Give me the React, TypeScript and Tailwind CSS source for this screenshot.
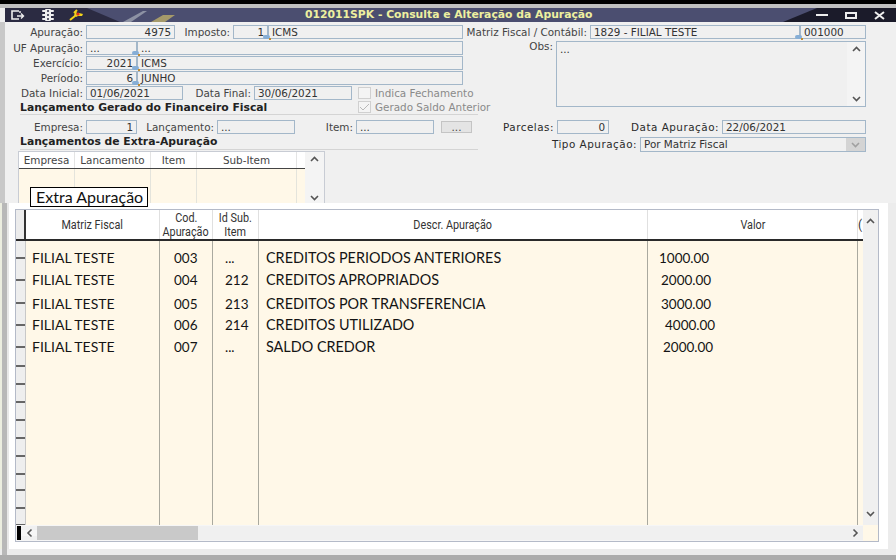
const borderField = "border border-[#a3b7c9]";

function LookupMark() {
  return (
    <span className="absolute right-[-4px] bottom-[-2px] z-10 h-[5px] w-[8px]">
      <span className="absolute left-0 top-0 h-[4px] w-[7px] rounded-full bg-[#86aed6]" />
      <span className="absolute right-0 bottom-0 h-[2px] w-[2px] bg-[#c08a30]" />
    </span>
  );
}

type FieldProps = {
  w: string;
  text?: string;
  right?: boolean;
  lookup?: boolean;
};

function Field({ w, text, right, lookup }: FieldProps) {
  return (
    <div
      className={`relative flex h-[14px] shrink-0 items-center bg-[#f0f0f0] px-[3px] leading-none text-[#333] ${borderField} ${w} ${
        right ? "justify-end" : ""
      }`}
    >
      <span className="whitespace-nowrap">{text}</span>
      {lookup ? <LookupMark /> : null}
    </div>
  );
}

function Label({ w, text, wide }: { w: string; text: string; wide?: boolean }) {
  return (
    <div
      className={`shrink-0 whitespace-nowrap pr-[3px] text-right leading-none ${w} ${
        wide ? "tracking-[0.5px] text-[#2a2a2a]" : "text-[#444]"
      }`}
    >
      {text}
    </div>
  );
}

function Chevron({ up, className }: { up?: boolean; className?: string }) {
  return (
    <svg width="9" height="6" viewBox="0 0 9 6" className={className}>
      <path
        d={up ? "M1 5 L4.5 1.5 L8 5" : "M1 1 L4.5 4.5 L8 1"}
        fill="none"
        stroke="#555"
        strokeWidth="1.6"
      />
    </svg>
  );
}

function TitleBar() {
  return (
    <div className="flex h-[14px] pl-[5px]">
      <div className="relative flex h-full w-full items-center overflow-hidden bg-[#4b4e70]">
        <svg width="891" height="14" viewBox="0 0 891 14" className="absolute left-0 top-0">
          <polygon points="0,0 82,0 115,14 0,14" fill="#2b2b42" />
          <polygon points="118,14 138,3 142,3 126,14" fill="#8d92a4" />
          <polygon points="146,14 158,7 170,7 160,14" fill="#a59a6a" />
          <polygon points="812,0 891,0 891,14 778,14" fill="#1b1b2a" />
        </svg>
        <svg width="14" height="12" viewBox="0 0 14 12" className="relative ml-[6px]">
          <path d="M8 2 H1 V10 H8" fill="none" stroke="#eee" strokeWidth="1.6" />
          <path d="M9 2 V4 M6 7 H12 M10 4.5 L12.5 7 L10 9.5" fill="none" stroke="#eee" strokeWidth="1.4" />
        </svg>
        <svg width="14" height="12" viewBox="0 0 14 12" className="relative ml-[16px]">
          <rect x="4" y="0" width="6" height="12" rx="1" fill="#f0f0f0" />
          <rect x="1" y="1" width="12" height="2" rx="1" fill="#f0f0f0" />
          <rect x="1" y="5" width="12" height="2" rx="1" fill="#f0f0f0" />
          <rect x="1" y="9" width="12" height="2" rx="1" fill="#f0f0f0" />
          <circle cx="7" cy="2" r="1" fill="#2b2b42" />
          <circle cx="7" cy="6" r="1" fill="#2b2b42" />
          <circle cx="7" cy="10" r="1" fill="#2b2b42" />
        </svg>
        <svg width="15" height="12" viewBox="0 0 15 12" className="relative ml-[14px]">
          <path d="M1 11 L6 7 L7 3 M8 1 L5 4" fill="none" stroke="#f2d21b" strokeWidth="2" />
          <path d="M6 6 L10 4 L14 5 L13 7 L9 7 L7 8 Z" fill="#f2d21b" />
          <circle cx="9" cy="5" r="1.6" fill="#e0301e" />
        </svg>
        <div className="relative ml-[221px] whitespace-nowrap text-[10.8px] font-bold leading-none text-[#eef0a0]">
          012011SPK - Consulta e Alteração da Apuração
        </div>
        <div className="relative ml-auto flex items-center pr-[11px]">
          <span className="h-[2px] w-[12px] bg-[#eee]" />
          <span className="ml-[17px] h-[7px] w-[12px] border-2 border-[#eee]" />
          <svg width="11" height="9" viewBox="0 0 11 9" className="ml-[17px]">
            <path d="M1 1 L10 8 M10 1 L1 8" stroke="#eee" strokeWidth="2" />
          </svg>
        </div>
      </div>
    </div>
  );
}

function Row({ mt, children }: { mt: string; children: React.ReactNode }) {
  return <div className={`flex items-center ${mt}`}>{children}</div>;
}

function LeftForm() {
  return (
    <div className="w-[464px] shrink-0 pt-[3px]">
      <Row mt="">
        <Label w="w-[86px]" text="Apuração:" />
        <Field w="w-[89px]" text="4975" right />
        <Label w="w-[58px]" text="Imposto:" />
        <Field w="w-[35px]" text="1" right lookup />
        <Field w="w-[195px]" text="ICMS" />
      </Row>
      <Row mt="mt-[2px]">
        <Label w="w-[86px]" text="UF Apuração:" />
        <Field w="w-[51px]" text="..." lookup />
        <Field w="w-[326px]" text="..." />
      </Row>
      <Row mt="mt-px">
        <Label w="w-[86px]" text="Exercício:" />
        <Field w="w-[51px]" text="2021" right lookup />
        <Field w="w-[326px]" text="ICMS" />
      </Row>
      <Row mt="mt-px">
        <Label w="w-[86px]" text="Período:" />
        <Field w="w-[51px]" text="6" right lookup />
        <Field w="w-[326px]" text="JUNHO" />
      </Row>
      <Row mt="mt-px">
        <Label w="w-[86px]" text="Data Inicial:" />
        <Field w="w-[97px]" text="01/06/2021" />
        <Label w="w-[71px]" text="Data Final:" />
        <Field w="w-[98px]" text="30/06/2021" />
        <span className="ml-[6px] h-[12px] w-[13px] shrink-0 border border-[#d0d0d0] bg-[#f4f4f4]" />
        <span className="ml-[4px] whitespace-nowrap leading-none text-[#8a8a8a]">Indica Fechamento</span>
      </Row>
      <div className="flex">
        <div className="ml-[20px] w-[338px] shrink-0 whitespace-nowrap pt-[3px] text-[10.8px] font-bold leading-[10px] text-[#222]">
          Lançamento Gerado do Financeiro Fiscal
        </div>
        <div className="flex items-center pt-[1px]">
          <span className="flex h-[12px] w-[13px] shrink-0 items-center justify-center border border-[#d0d0d0] bg-[#f4f4f4]">
            <svg width="11" height="8" viewBox="0 0 11 8">
              <path d="M1 4 L4 7 L10 1" fill="none" stroke="#b8b8b8" strokeWidth="1" />
            </svg>
          </span>
          <span className="ml-[4px] whitespace-nowrap leading-none text-[#8a8a8a]">Gerado Saldo Anterior</span>
        </div>
      </div>
      <div className="ml-[20px] mt-px h-px w-[458px] bg-[#d4d4d4]" />
      <Row mt="mt-[5px]">
        <Label w="w-[86px]" text="Empresa:" />
        <Field w="w-[51px]" text="1" right />
        <Label w="w-[80px]" text="Lançamento:" />
        <Field w="w-[78px]" text="..." />
        <Label w="w-[61px]" text="Item:" />
        <Field w="w-[78px]" text="..." />
        <div className="ml-[7px] flex h-[12px] w-[31px] shrink-0 items-center justify-center border border-[#c4c4c4] bg-[#e4e4e4] leading-none text-[#444]">
          ...
        </div>
      </Row>
      <div className="ml-[20px] mt-[3px] whitespace-nowrap text-[10.8px] font-bold leading-[10px] text-[#222]">
        Lançamentos de Extra-Apuração
      </div>
      <div className="ml-[20px] mt-[2px] h-px w-[458px] bg-[#d4d4d4]" />
      <ExtraTable />
    </div>
  );
}

function ExtraTable() {
  const columns = [
    { name: "Empresa", w: "w-[56px]" },
    { name: "Lancamento", w: "w-[76px]" },
    { name: "Item", w: "w-[46px]" },
    { name: "Sub-Item", w: "w-[100px]" },
  ];
  return (
    <div className="ml-[18px] mt-px flex h-[54px] w-[307px] border border-[#c8ccd4] bg-white">
      <div className="flex w-[286px] flex-col">
        <div className="flex h-[17px] border-b border-[#444]">
          {columns.map((c) => (
            <div
              key={c.name}
              className={`flex shrink-0 items-center justify-center border-r border-[#e4e4e4] leading-none text-[#444] ${c.w}`}
            >
              {c.name}
            </div>
          ))}
        </div>
        <div className="flex flex-1 bg-[#fff8e8]">
          {columns.map((c) => (
            <div key={c.name} className={`shrink-0 border-r border-[#e4e4dc] ${c.w}`} />
          ))}
        </div>
      </div>
      <div className="flex flex-1 flex-col items-center justify-between bg-[#f4f4f4] py-[4px]">
        <Chevron up />
        <Chevron className="mb-[-1px]" />
      </div>
    </div>
  );
}

function RightForm() {
  return (
    <div className="w-[402px] shrink-0 pt-[3px]">
      <Row mt="">
        <Label w="w-[126px]" text="Matriz Fiscal / Contábil:" />
        <Field w="w-[210px]" text="1829 - FILIAL TESTE" lookup />
        <Field w="w-[66px]" text="001000" />
      </Row>
      <div className="mt-[2px] flex">
        <Label w="w-[92px]" text="Obs:" />
        <div className={`flex h-[66px] w-[310px] bg-[#f0f0f0] ${borderField}`}>
          <div className="flex-1 px-[3px] pt-[2px] leading-none text-[#333]">...</div>
          <div className="flex w-[18px] flex-col items-center justify-between bg-[#f4f4f4] py-[4px]">
            <Chevron up />
            <Chevron />
          </div>
        </div>
      </div>
      <Row mt="mt-[13px]">
        <Label w="w-[93px]" text="Parcelas:" wide />
        <Field w="w-[52px]" text="0" right />
        <Label w="w-[113px]" text="Data Apuração:" wide />
        <Field w="w-[144px]" text="22/06/2021" />
      </Row>
      <Row mt="mt-[3px]">
        <Label w="w-[176px]" text="Tipo Apuração:" wide />
        <div className={`flex h-[15px] w-[226px] items-center bg-[#f0f0f0] pl-[3px] leading-none text-[#333] ${borderField}`}>
          <span className="flex-1">Por Matriz Fiscal</span>
          <span className="flex h-full w-[19px] items-center justify-center bg-[#d4d4d4]">
            <Chevron className="opacity-40" />
          </span>
        </div>
      </Row>
    </div>
  );
}

const gridColumns = [
  {
    head: ["Matriz Fiscal"],
    w: "w-[134px]",
    body: "pt-[5px] text-[14px]",
    cells: [
      { text: "FILIAL TESTE", pad: "pl-[6px]" },
      { text: "FILIAL TESTE", pad: "pl-[6px]" },
      { text: "FILIAL TESTE", pad: "pl-[6px]" },
      { text: "FILIAL TESTE", pad: "pl-[6px]" },
      { text: "FILIAL TESTE", pad: "pl-[6px]" },
    ],
  },
  {
    head: ["Cod.", "Apuração"],
    w: "w-[53px]",
    body: "pt-[6px] text-[13.5px]",
    cells: [
      { text: "003", pad: "pl-[14px]" },
      { text: "004", pad: "pl-[14px]" },
      { text: "005", pad: "pl-[14px]" },
      { text: "006", pad: "pl-[14px]" },
      { text: "007", pad: "pl-[14px]" },
    ],
  },
  {
    head: ["Id Sub.", "Item"],
    w: "w-[46px]",
    body: "pt-[6px] text-[13.5px]",
    cells: [
      { text: "...", pad: "pl-[12px]" },
      { text: "212", pad: "pl-[12px]" },
      { text: "213", pad: "pl-[12px]" },
      { text: "214", pad: "pl-[12px]" },
      { text: "...", pad: "pl-[12px]" },
    ],
  },
  {
    head: ["Descr. Apuração"],
    w: "w-[389px]",
    body: "pt-[6px] text-[14.4px]",
    cells: [
      { text: "CREDITOS PERIODOS ANTERIORES", pad: "pl-[7px]" },
      { text: "CREDITOS APROPRIADOS", pad: "pl-[7px]" },
      { text: "CREDITOS POR TRANSFERENCIA", pad: "pl-[7px]" },
      { text: "CREDITOS UTILIZADO", pad: "pl-[7px]" },
      { text: "SALDO CREDOR", pad: "pl-[7px]" },
    ],
  },
  {
    head: ["Valor"],
    w: "w-[210px]",
    body: "pt-[6px] text-[13.5px]",
    cells: [
      { text: "1000.00", pad: "pl-[11px]" },
      { text: "2000.00", pad: "pl-[13px]" },
      { text: "3000.00", pad: "pl-[13px]" },
      { text: "4000.00", pad: "pl-[17px]" },
      { text: "2000.00", pad: "pl-[15px]" },
    ],
  },
];

const rowHeights = ["h-[22px]", "h-[22px]", "h-[26px]", "h-[16px]", "h-[28px]"];
const tickHeights = [
  "h-[18px]", "h-[22px]", "h-[23px]", "h-[22px]", "h-[22px]", "h-[19px]", "h-[18px]",
  "h-[18px]", "h-[18px]", "h-[18px]", "h-[18px]", "h-[18px]", "h-[16px]", "h-[18px]", "h-[17px]",
];

function DataGrid() {
  return (
    <div className="flex h-[333px] w-[864px] border border-[#b4bac8] bg-white">
      <div className="flex w-[847px] flex-col">
        <div className="flex h-[31px] border-b-2 border-[#2a2a2a]">
          <div className="w-[10px] shrink-0 border-r-2 border-[#333] bg-[#ececec]" />
          {gridColumns.map((c) => (
            <div
              key={c.head[0]}
              className={`flex shrink-0 flex-col items-center justify-center border-r border-[#e0e0e0] font-['Roboto'] text-[12px] leading-[14px] text-[#333] ${c.w}`}
            >
              {c.head.map((h) => (
                <span key={h} className="scale-x-90 whitespace-nowrap">
                  {h}
                </span>
              ))}
            </div>
          ))}
          <div className="min-w-0 flex-1 overflow-hidden pt-[8px] font-['Roboto'] text-[12px] leading-[14px] text-[#333]">
            (
          </div>
        </div>
        <div className="flex min-h-0 flex-1 overflow-hidden bg-[#fff8e8]">
          <div className="flex w-[10px] shrink-0 flex-col border-r border-[#c8c8c8] bg-[#eeeeee]">
            {tickHeights.map((h, i) => (
              <div key={i} className={`shrink-0 border-b-2 border-[#666] ${h}`} />
            ))}
          </div>
          {gridColumns.map((c) => (
            <div
              key={c.head[0]}
              className={`shrink-0 border-r-[1.5px] border-[#aaa99f] font-['Lato'] text-[#141414] ${c.body} ${c.w}`}
            >
              {c.cells.map((cell, i) => (
                <div key={i} className={`flex items-center whitespace-nowrap ${rowHeights[i]} ${cell.pad}`}>
                  {cell.text}
                </div>
              ))}
            </div>
          ))}
        </div>
        <div className="flex h-[16px] shrink-0 items-center border-y border-[#f6f6f6] bg-[#f0f0f0]">
          <span className="ml-[1px] h-full w-[4px] bg-black" />
          <span className="flex w-[16px] justify-center bg-[#f6f6f6]">
            <Chevron up className="-rotate-90" />
          </span>
          <span className="h-full w-[161px] bg-[#c9c9c9]" />
          <span className="ml-auto mr-[3px] flex w-[9px] justify-center">
            <Chevron className="-rotate-90" />
          </span>
        </div>
      </div>
      <div className="flex flex-1 flex-col bg-[#f0f0f0]">
        <div className="flex flex-1 flex-col items-center justify-between py-[8px]">
          <Chevron up />
          <Chevron />
        </div>
        <div className="h-[16px] bg-[#fff8e8]" />
      </div>
    </div>
  );
}

export default function App() {
  return (
    <div className="relative flex h-[560px] w-[896px] flex-col overflow-hidden bg-[#f0f0f0] font-['DejaVu_Sans'] text-[10.4px]">
      <div className="h-[4px] shrink-0 bg-black" />
      <div className="h-[4px] shrink-0 bg-[#c0c0c0]" />
      <TitleBar />
      <div className="flex h-[181px] shrink-0 border-l-[5px] border-[#c8c8c8]">
        <div className="-ml-[5px] flex">
          <LeftForm />
          <RightForm />
        </div>
      </div>
      <div className="relative z-10 flex flex-1 bg-[#ececec]">
        <div className="w-[2px] shrink-0 bg-[#eceee0]" />
        <div className="w-[5px] shrink-0 bg-[#b8b8b8]" />
        <div className="w-[2px] shrink-0 bg-[#e8e8e8]" />
        <div className="w-[879px] shrink-0 bg-white pl-[6px] pt-[6px]">
          <DataGrid />
        </div>
      </div>
      <div className="relative z-10 flex h-[6px] shrink-0 bg-[#ececec]">
        <div className="ml-[2px] w-[5px] bg-[#b8b8b8]" />
      </div>
      <div className="relative z-10 h-[5px] shrink-0 bg-[#acacac]" />
      <div className="absolute left-[30px] top-[187px] z-20 flex h-[20px] w-[118px] items-center border border-black bg-white pl-[5px] font-['Lato'] text-[16px] leading-none text-[#111]">
        Extra Apuração
      </div>
    </div>
  );
}
